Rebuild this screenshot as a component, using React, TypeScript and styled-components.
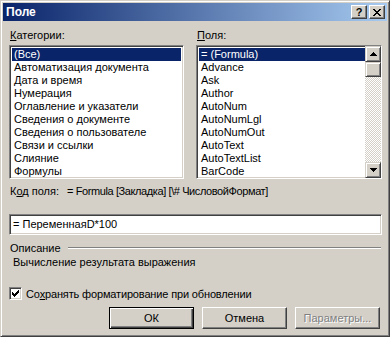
import React from 'react';
import styled, { createGlobalStyle } from 'styled-components';

const GlobalStyle = createGlobalStyle`
  html, body {
    margin: 0;
    padding: 0;
    background: #d4d0c8;
  }
  * {
    box-sizing: border-box;
  }
`;

const Window = styled.div`
  width: 390px;
  height: 337px;
  padding: 2px;
  background: #d4d0c8;
  border: 1px solid;
  border-color: #d4d0c8 #404040 #404040 #d4d0c8;
  box-shadow: inset 1px 1px #ffffff, inset -1px -1px #808080;
  font-family: 'Liberation Sans', Arial, sans-serif;
  font-size: 11px;
  color: #000;
  display: flex;
  flex-direction: column;
`;

const TitleBar = styled.div`
  height: 18px;
  display: flex;
  align-items: center;
  padding: 0 2px 0 3px;
  background: linear-gradient(to right, #0a246a, #a6caf0);
`;

const Title = styled.div`
  flex: 1;
  color: #fff;
  font-weight: bold;
  font-size: 12px;
`;

const CaptionButton = styled.div<{ $last?: boolean }>`
  width: 16px;
  height: 14px;
  margin-left: ${(p) => (p.$last ? '2px' : '0')};
  display: flex;
  align-items: center;
  justify-content: center;
  background: #d4d0c8;
  border: 1px solid;
  border-color: #ffffff #404040 #404040 #ffffff;
  box-shadow: inset -1px -1px #808080, inset 1px 1px #d4d0c8;
  font-weight: bold;
  font-size: 11px;
  line-height: 1;
  color: #000;
`;

const Body = styled.div`
  flex: 1;
  display: flex;
  flex-direction: column;
  padding: 8px 5px 0 6px;
`;

const Columns = styled.div`
  display: grid;
  grid-template-columns: 175px 186px;
  column-gap: 12px;
`;

const Column = styled.div`
  display: flex;
  flex-direction: column;
`;

const Label = styled.div`
  height: 13px;
  line-height: 13px;
  padding-left: 1px;
  margin-bottom: 3px;
`;

const Sunken = styled.div`
  background: #fff;
  border: 1px solid;
  border-color: #808080 #ffffff #ffffff #808080;
  box-shadow: inset 1px 1px #404040, inset -1px -1px #d4d0c8;
  padding: 2px;
`;

const ListBox = styled(Sunken)`
  height: 134px;
  display: flex;
  overflow: hidden;
`;

const Rows = styled.div`
  flex: 1;
  display: flex;
  flex-direction: column;
  min-width: 0;
`;

const Row = styled.div<{ $selected?: boolean }>`
  height: 13px;
  line-height: 13px;
  padding-left: 2px;
  white-space: nowrap;
  background: ${(p) => (p.$selected ? '#0a246a' : 'transparent')};
  color: ${(p) => (p.$selected ? '#fff' : '#000')};
`;

const ScrollBar = styled.div`
  width: 16px;
  margin: -2px -2px -2px 0;
  display: flex;
  flex-direction: column;
  background: repeating-conic-gradient(#ffffff 0 25%, #d4d0c8 0 50%) 0 0 / 2px 2px;
`;

const ScrollButton = styled.div`
  width: 16px;
  height: 16px;
  display: flex;
  align-items: center;
  justify-content: center;
  background: #d4d0c8;
  border: 1px solid;
  border-color: #d4d0c8 #404040 #404040 #d4d0c8;
  box-shadow: inset 1px 1px #ffffff, inset -1px -1px #808080;
`;

const Thumb = styled(ScrollButton)`
  height: 15px;
`;

const Track = styled.div`
  flex: 1;
`;

const CodeRow = styled.div`
  display: flex;
  height: 13px;
  line-height: 13px;
  margin-top: 6px;
  padding-left: 1px;
  white-space: nowrap;
`;

const CodeLabel = styled.span`
  width: 57px;
`;

const CodeValue = styled.span`
  letter-spacing: -0.4px;
`;

const Input = styled(Sunken)`
  height: 21px;
  margin-top: 16px;
  line-height: 15px;
  padding: 2px 3px;
`;

const GroupHeader = styled.div`
  display: flex;
  align-items: center;
  height: 13px;
  margin-top: 6px;
  padding-left: 1px;
`;

const Groove = styled.div`
  flex: 1;
  height: 2px;
  margin: 1px 1px 0 7px;
  border-top: 1px solid #808080;
  border-bottom: 1px solid #ffffff;
`;

const Description = styled.div`
  height: 13px;
  line-height: 13px;
  margin-top: 2px;
  padding-left: 4px;
`;

const CheckRow = styled.label`
  display: flex;
  align-items: center;
  gap: 4px;
  margin-top: 18px;
  height: 13px;
  letter-spacing: -0.15px;
`;

const CheckBox = styled.span`
  width: 13px;
  height: 13px;
  display: flex;
  align-items: center;
  justify-content: center;
  background: #fff;
  border: 1px solid;
  border-color: #808080 #ffffff #ffffff #808080;
  box-shadow: inset 1px 1px #404040, inset -1px -1px #d4d0c8;
`;

const Buttons = styled.div`
  display: flex;
  justify-content: flex-end;
  gap: 8px;
  margin-top: 7px;
  padding-right: 2px;
`;

const Button = styled.div<{ $default?: boolean; $disabled?: boolean }>`
  width: 85px;
  height: 22px;
  display: flex;
  align-items: center;
  justify-content: center;
  background: #d4d0c8;
  border: 1px solid;
  border-color: ${(p) =>
    p.$default ? '#000' : '#ffffff #404040 #404040 #ffffff'};
  box-shadow: ${(p) =>
    p.$default
      ? 'inset 1px 1px #ffffff, inset -1px -1px #404040, inset -2px -2px #808080'
      : 'inset -1px -1px #808080, inset 1px 1px #d4d0c8'};
  color: ${(p) => (p.$disabled ? '#808080' : '#000')};
  text-shadow: ${(p) => (p.$disabled ? '1px 1px #ffffff' : 'none')};
`;

const U = styled.span`
  text-decoration: underline;
`;

const ArrowUp = () => (
  <svg width="7" height="4" viewBox="0 0 7 4">
    <path d="M3 0h1v1h1v1h1v1h1v1H0V3h1V2h1V1h1z" fill="#000" />
  </svg>
);

const ArrowDown = () => (
  <svg width="7" height="4" viewBox="0 0 7 4">
    <path d="M0 0h7v1H6v1H5v1H4v1H3V3H2V2H1V1H0z" fill="#000" />
  </svg>
);

const CloseIcon = () => (
  <svg width="8" height="7" viewBox="0 0 8 7">
    <path
      d="M0 0h2v1h1v1h2V1h1V0h2v1H7v1H6v1H5v1h1v1h1v1h1v1H6V6H5V5H3v1H2v1H0V6h1V5h1V4h1V3H2V2H1V1H0z"
      fill="#000"
    />
  </svg>
);

const CheckMark = () => (
  <svg width="7" height="7" viewBox="0 0 7 7">
    <path d="M6 0h1v3H6v1H5v1H4v1H3v1H2V6H1V5H0V2h1v1h1v1h1V3h1V2h1V1h1z" fill="#000" />
  </svg>
);

const categories = [
  '(Все)',
  'Автоматизация документа',
  'Дата и время',
  'Нумерация',
  'Оглавление и указатели',
  'Сведения о документе',
  'Сведения о пользователе',
  'Связи и ссылки',
  'Слияние',
  'Формулы',
];

const fields = [
  '= (Formula)',
  'Advance',
  'Ask',
  'Author',
  'AutoNum',
  'AutoNumLgl',
  'AutoNumOut',
  'AutoText',
  'AutoTextList',
  'BarCode',
];

const App: React.FC = () => {
  return (
    <>
      <GlobalStyle />
      <Window>
        <TitleBar>
          <Title>Поле</Title>
          <CaptionButton>?</CaptionButton>
          <CaptionButton $last>
            <CloseIcon />
          </CaptionButton>
        </TitleBar>
        <Body>
          <Columns>
            <Column>
              <Label>
                <U>К</U>атегории:
              </Label>
              <ListBox>
                <Rows>
                  {categories.map((c, i) => (
                    <Row key={c} $selected={i === 0}>
                      {c}
                    </Row>
                  ))}
                </Rows>
              </ListBox>
            </Column>
            <Column>
              <Label>
                <U>П</U>оля:
              </Label>
              <ListBox>
                <Rows>
                  {fields.map((f, i) => (
                    <Row key={f} $selected={i === 0}>
                      {f}
                    </Row>
                  ))}
                </Rows>
                <ScrollBar>
                  <ScrollButton>
                    <ArrowUp />
                  </ScrollButton>
                  <Thumb />
                  <Track />
                  <ScrollButton>
                    <ArrowDown />
                  </ScrollButton>
                </ScrollBar>
              </ListBox>
            </Column>
          </Columns>
          <CodeRow>
            <CodeLabel>
              К<U>о</U>д поля:
            </CodeLabel>
            <CodeValue>= Formula [Закладка] [\# ЧисловойФормат]</CodeValue>
          </CodeRow>
          <Input>= ПеременнаяD*100</Input>
          <GroupHeader>
            Описание
            <Groove />
          </GroupHeader>
          <Description>Вычисление результата выражения</Description>
          <CheckRow>
            <CheckBox>
              <CheckMark />
            </CheckBox>
            <span>
              Со<U>х</U>ранять форматирование при обновлении
            </span>
          </CheckRow>
          <Buttons>
            <Button $default>ОК</Button>
            <Button>Отмена</Button>
            <Button $disabled>Параметры...</Button>
          </Buttons>
        </Body>
      </Window>
    </>
  );
};

export default App;
